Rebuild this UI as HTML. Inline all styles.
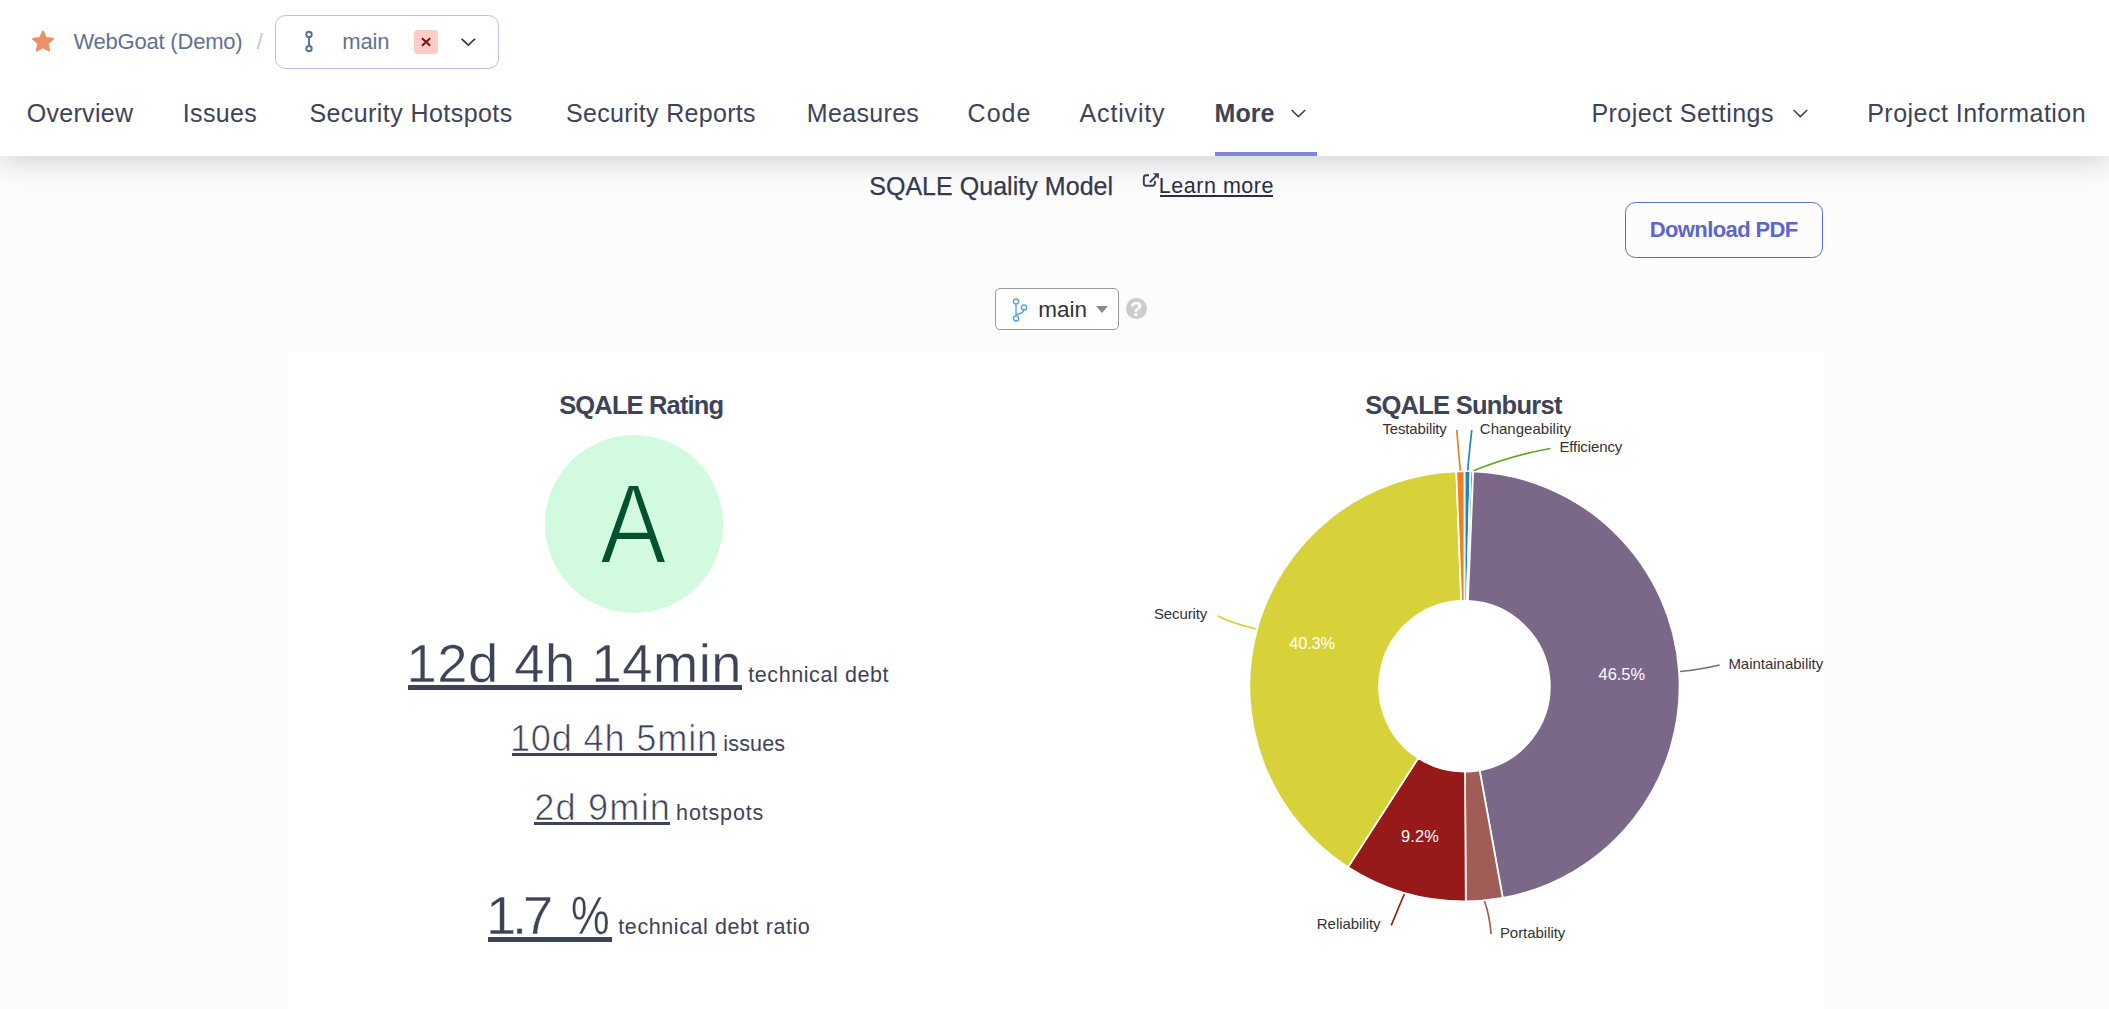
<!DOCTYPE html>
<html lang="en">
<head>
<meta charset="utf-8">
<title>SQALE Quality Model - WebGoat (Demo)</title>
<style>
html,body{margin:0;padding:0;}
html{overflow:hidden;}
body{width:2109px;height:1009px;overflow:hidden;background:#fcfcfd;position:relative;
 font-family:"Liberation Sans",sans-serif;color:#3e4357;}
.t{position:absolute;white-space:nowrap;line-height:1;margin:0;padding:0;}
a{color:inherit;text-decoration:none;}
#hdr{position:absolute;left:0;top:0;width:2109px;height:156px;background:#fff;
 box-shadow:0 2px 30px 0 rgba(29,33,47,.235);z-index:5;}
.nav{font-size:24.5px;color:#3e4357;}
#panel{position:absolute;left:287.7px;top:351.8px;width:1537.4px;height:657.2px;background:#fff;}
.big{color:#3e4357;text-decoration:none;}
.thin{-webkit-text-stroke:.7px #fff;}
.thin1{-webkit-text-stroke:.4px #fff;}
.ul{position:absolute;background:#3e4357;}
.sm{font-size:21px;color:#3e4357;}
svg{position:absolute;overflow:visible;}
.cl{color:#333;}
.pl{color:#fff;}
</style>
</head>
<body>

<!-- ================= HEADER ================= -->
<div id="hdr">
  <!-- star -->
  <svg style="left:31px;top:30px" width="24" height="23" viewBox="0 0 24 23">
    <path d="M12 1.5 L14.9 8.0 L22.0 8.8 L16.7 13.6 L18.2 20.7 L12 17.1 L5.8 20.7 L7.3 13.6 L2.0 8.8 L9.1 8.0 Z" fill="#ee9067" stroke="#ee9067" stroke-width="1.9" stroke-linejoin="round"/>
  </svg>
  <span class="t" id="crumb" style="left:73.4px;top:30.62px;font-size:22px;color:#5f7195;letter-spacing:-0.21px;">WebGoat (Demo)</span>
  <span class="t" id="slash" style="left:256.8px;top:30.62px;font-size:22px;color:#c4c7cf;letter-spacing:0;">/</span>

  <!-- branch box -->
  <div id="bbox" style="position:absolute;left:275px;top:15px;width:222px;height:52px;border:1px solid #b8c2dc;border-radius:10.5px;background:#fff;"></div>
  <svg style="left:304px;top:30px" width="10" height="23" viewBox="0 0 10 23">
    <circle cx="5" cy="4.4" r="2.7" fill="none" stroke="#5f7195" stroke-width="2"/>
    <circle cx="5" cy="18.6" r="2.7" fill="none" stroke="#5f7195" stroke-width="2"/>
    <line x1="5" y1="7" x2="5" y2="16" stroke="#5f7195" stroke-width="2"/>
  </svg>
  <span class="t" id="bmain" style="left:342.2px;top:30.62px;font-size:22px;color:#5f7195;letter-spacing:-0.10px;">main</span>
  <div style="position:absolute;left:414px;top:30px;width:24px;height:24px;border-radius:3.5px;background:#fecdca;"></div>
  <svg style="left:414px;top:30px" width="24" height="24" viewBox="0 0 24 24">
    <path d="M8.0 8.2 L16.2 15.8 M16.2 8.2 L8.0 15.8" stroke="#7a130c" stroke-width="2" fill="none"/>
  </svg>
  <svg style="left:460px;top:37px" width="17" height="11" viewBox="0 0 17 11">
    <path d="M1.6 1.8 L8.3 8.2 L15 1.8" stroke="#2f3448" stroke-width="1.65" fill="none"/>
  </svg>

  <!-- nav -->
  <nav>
  <a class="t nav" id="n1" style="left:26.7px;top:101.08px;font-size:25px;letter-spacing:0.31px;">Overview</a>
  <a class="t nav" id="n2" style="left:182.8px;top:101.08px;font-size:25px;letter-spacing:0.36px;">Issues</a>
  <a class="t nav" id="n3" style="left:309.4px;top:101.08px;font-size:25px;letter-spacing:0.43px;">Security Hotspots</a>
  <a class="t nav" id="n4" style="left:566.0px;top:101.08px;font-size:25px;letter-spacing:0.32px;">Security Reports</a>
  <a class="t nav" id="n5" style="left:806.8px;top:101.08px;font-size:25px;letter-spacing:0.33px;">Measures</a>
  <a class="t nav" id="n6" style="left:967.6px;top:101.08px;font-size:25px;letter-spacing:0.99px;">Code</a>
  <a class="t nav" id="n7" style="left:1079.6px;top:101.08px;font-size:25px;letter-spacing:0.83px;">Activity</a>
  <a class="t nav" id="n8" style="left:1214.6px;top:101.08px;font-weight:bold;font-size:25px;letter-spacing:-0.00px;">More</a>
  <svg style="left:1290px;top:108.4px" width="17" height="11" viewBox="0 0 17 11">
    <path d="M1.6 2 L8.4 8.5 L15.2 2" stroke="#3e4357" stroke-width="1.65" fill="none"/>
  </svg>
  <div style="position:absolute;left:1215px;top:152px;width:102px;height:4px;background:#7b85d9;"></div>
  <a class="t nav" id="n9" style="left:1591.4px;top:101.08px;font-size:25px;letter-spacing:0.46px;">Project Settings</a>
  <svg style="left:1792px;top:108.4px" width="17" height="11" viewBox="0 0 17 11">
    <path d="M1.6 2 L8.4 8.5 L15.2 2" stroke="#3e4357" stroke-width="1.65" fill="none"/>
  </svg>
  <a class="t nav" id="n10" style="left:1867.2px;top:101.08px;font-size:25px;letter-spacing:0.48px;">Project Information</a>
  </nav>
</div>

<!-- ================= TITLE ROW ================= -->
<h1 class="t" id="title" style="left:869.2px;top:174.08px;font-size:25px;font-weight:normal;color:#353a4f;-webkit-text-stroke:.25px #353a4f;letter-spacing:0.04px;">SQALE Quality Model</h1>
<svg style="left:1142px;top:172px" width="18" height="16" viewBox="0 0 18 16">
  <path d="M7 3.3 H4.3 Q1.8 3.3 1.8 5.8 V11.2 Q1.8 13.7 4.3 13.7 H10.4 Q12.9 13.7 12.9 11.2 V9" fill="none" stroke="#3a3f55" stroke-width="1.9"/>
  <path d="M7.9 10.2 L15 3.1" fill="none" stroke="#3a3f55" stroke-width="2"/>
  <path d="M11 1.2 H16.9 V7.1 Z" fill="#3a3f55"/>
</svg>
<a class="t" id="learn" style="left:1158.8px;top:176.05px;font-size:21.5px;color:#2a2f45;text-decoration:none;letter-spacing:0.52px;">Learn more</a>

<div class="ul" style="left:1160px;top:195px;width:113.2px;height:2px;background:#2a2f45;"></div>
<div id="dl" style="position:absolute;left:1625px;top:202px;width:196px;height:54px;border:1px solid #5d6cd0;border-radius:10.5px;background:transparent;"></div>
<span class="t" id="dltext" style="left:1649.7px;top:218.62px;font-size:22px;font-weight:bold;color:#5b67c9;letter-spacing:-0.60px;">Download PDF</span>

<!-- branch select -->
<div id="sel" style="position:absolute;left:995px;top:288px;width:122px;height:40px;border:1px solid #9a9a9a;border-radius:5px;background:#fff;"></div>
<svg style="left:1011px;top:297px" width="18" height="26" viewBox="0 0 18 26">
  <circle cx="5" cy="4.4" r="2.6" fill="#fff" stroke="#4b9fd5" stroke-width="1.3"/>
  <circle cx="5" cy="21.4" r="2.6" fill="#fff" stroke="#4b9fd5" stroke-width="1.3"/>
  <circle cx="13" cy="10.4" r="2.6" fill="#fff" stroke="#4b9fd5" stroke-width="1.3"/>
  <path d="M5 7 V18.8 M5 17.6 Q12 16.5 12.8 13" fill="none" stroke="#4b9fd5" stroke-width="1.3"/>
</svg>
<span class="t" id="smain" style="left:1038.3px;top:299.20px;font-size:22.5px;color:#333;letter-spacing:-0.05px;">main</span>
<div style="position:absolute;left:1096px;top:306px;width:0;height:0;border-left:6px solid transparent;border-right:6px solid transparent;border-top:7px solid #888;"></div>
<div style="position:absolute;left:1125.5px;top:298.4px;width:21px;height:21px;border-radius:50%;background:#cccccc;"></div>
<span class="t" id="qm" style="left:1129.9px;top:299.2px;font-size:20px;font-weight:bold;color:#fff;">?</span>

<!-- ================= PANEL ================= -->
<div id="panel"></div>

<h2 class="t" id="h_rating" style="left:559.2px;top:392.66px;font-size:25.5px;font-weight:bold;color:#3e4357;letter-spacing:-0.85px;">SQALE Rating</h2>
<div id="ratingc" style="position:absolute;left:545px;top:435px;width:178px;height:178px;border-radius:50%;background:#d2fadf;"></div>
<span class="t" id="ratingA" style="left:600.4px;top:467.3px;font-size:114px;color:#04502f;-webkit-text-stroke:2.2px #d2fadf;transform-origin:0 0;transform:scaleX(0.875);">A</span>

<a class="t big thin1" id="v1" style="left:406.5px;top:637.27px;font-size:54.3px;letter-spacing:0.54px;">12d 4h 14min</a>
<span class="t sm" id="l1" style="left:748.2px;top:665.05px;font-size:21.5px;letter-spacing:0.59px;">technical debt</span>
<a class="t big thin" id="v2" style="left:509.9px;top:720.60px;font-size:36.2px;letter-spacing:0.81px;">10d 4h 5min</a>
<span class="t sm" id="l2" style="left:723.3px;top:734.05px;font-size:21.5px;letter-spacing:0.16px;">issues</span>
<a class="t big thin" id="v3" style="left:534.3px;top:789.60px;font-size:36.2px;letter-spacing:1.16px;">2d 9min</a>
<span class="t sm" id="l3" style="left:676.1px;top:803.05px;font-size:21.5px;letter-spacing:0.84px;">hotspots</span>
<a class="t big thin1" id="v4" style="left:486.1px;top:889.27px;font-size:54.3px;letter-spacing:-4.25px;">1.7</a>
<span class="t big thin1" id="v4b" style="left:570.7px;top:889.27px;font-size:54.3px;letter-spacing:0;transform-origin:0 0;transform:scaleX(0.8);">%</span>
<span class="t sm" id="l4" style="left:618.3px;top:917.05px;font-size:21.5px;letter-spacing:0.58px;">technical debt ratio</span>


<div class="ul" style="left:408.1px;top:685.2px;width:333.7px;height:4.6px;"></div>
<div class="ul" style="left:511.9px;top:753.1px;width:205.6px;height:2.7px;"></div>
<div class="ul" style="left:534.4px;top:822.0px;width:135.7px;height:2.7px;"></div>
<div class="ul" style="left:487.5px;top:937.2px;width:124.2px;height:4.6px;"></div>

<h2 class="t" id="h_sun" style="left:1365.2px;top:392.66px;font-size:25.5px;font-weight:bold;color:#3e4357;letter-spacing:-0.74px;">SQALE Sunburst</h2>

<!-- CHART -->
<svg id="chart" style="left:0;top:0" width="2109" height="1009" viewBox="0 0 2109 1009">
  <path d="M1464.45 471.15 A215.1 215.1 0 0 1 1470.53 471.24 L1466.86 600.88 A85.4 85.4 0 0 0 1464.45 600.85 Z" fill="#2484c1" stroke="#fff" stroke-width="1.75" stroke-linejoin="round"/>
  <path d="M1470.53 471.24 A215.1 215.1 0 0 1 1473.23 471.33 L1467.94 600.92 A85.4 85.4 0 0 0 1466.86 600.88 Z" fill="#65a620" stroke="#fff" stroke-width="1.75" stroke-linejoin="round"/>
  <path d="M1473.23 471.33 A215.1 215.1 0 0 1 1502.76 897.91 L1479.66 770.28 A85.4 85.4 0 0 0 1467.94 600.92 Z" fill="#7b6888" stroke="#fff" stroke-width="1.75" stroke-linejoin="round"/>
  <path d="M1502.76 897.91 A215.1 215.1 0 0 1 1465.80 901.35 L1464.99 771.65 A85.4 85.4 0 0 0 1479.66 770.28 Z" fill="#a05d56" stroke="#fff" stroke-width="1.75" stroke-linejoin="round"/>
  <path d="M1465.80 901.35 A215.1 215.1 0 0 1 1348.05 867.14 L1418.24 758.07 A85.4 85.4 0 0 0 1464.99 771.65 Z" fill="#961a1a" stroke="#fff" stroke-width="1.75" stroke-linejoin="round"/>
  <path d="M1348.05 867.14 A215.1 215.1 0 0 1 1456.34 471.30 L1461.23 600.91 A85.4 85.4 0 0 0 1418.24 758.07 Z" fill="#d8d23a" stroke="#fff" stroke-width="1.75" stroke-linejoin="round"/>
  <path d="M1456.34 471.30 A215.1 215.1 0 0 1 1464.45 471.15 L1464.45 600.85 A85.4 85.4 0 0 0 1461.23 600.91 Z" fill="#e98125" stroke="#fff" stroke-width="1.75" stroke-linejoin="round"/>
  <path d="M1456.8 430 C1458 445 1459 458 1460.4 470.6" fill="none" stroke="#e98125" stroke-width="1.7"/>
  <path d="M1471.8 430 C1470 446 1468.6 458 1467.8 470.4" fill="none" stroke="#2484c1" stroke-width="1.7"/>
  <path d="M1550.3 448.5 C1520 454 1495 462 1473.6 470.8" fill="none" stroke="#65a620" stroke-width="1.7"/>
  <path d="M1719.6 665 C1705 668.5 1692 670.5 1680 671.5" fill="none" stroke="#7b6888" stroke-width="1.7"/>
  <path d="M1491.1 934.1 C1490 920 1487 908 1484.4 901" fill="none" stroke="#a05d56" stroke-width="1.7"/>
  <path d="M1391.2 925.4 C1396 914 1400 904 1404.4 894" fill="none" stroke="#961a1a" stroke-width="1.7"/>
  <path d="M1217.9 615.8 C1228 622 1242 625.5 1256.4 629" fill="none" stroke="#d8d23a" stroke-width="1.7"/>
</svg>

<!-- chart labels -->
<span class="t cl" id="c1" style="left:1382.4px;top:420.55px;font-size:15px;letter-spacing:-0.14px;">Testability</span>
<span class="t cl" id="c2" style="left:1479.8px;top:420.55px;font-size:15px;letter-spacing:0.02px;">Changeability</span>
<span class="t cl" id="c3" style="left:1559.4px;top:438.55px;font-size:15px;letter-spacing:-0.11px;">Efficiency</span>
<span class="t cl" id="c4" style="left:1728.4px;top:655.55px;font-size:15px;letter-spacing:-0.02px;">Maintainability</span>
<span class="t cl" id="c5" style="left:1499.9px;top:924.55px;font-size:15px;letter-spacing:-0.04px;">Portability</span>
<span class="t cl" id="c6" style="left:1316.8px;top:915.55px;font-size:15px;letter-spacing:-0.04px;">Reliability</span>
<span class="t cl" id="c7" style="left:1154.0px;top:605.55px;font-size:15px;letter-spacing:-0.14px;">Security</span>
<span class="t pl" id="p1" style="left:1598.5px;top:666.36px;font-size:16.4px;letter-spacing:0.01px;">46.5%</span>
<span class="t pl" id="p2" style="left:1289.3px;top:635.36px;font-size:16.4px;letter-spacing:-0.20px;">40.3%</span>
<span class="t pl" id="p3" style="left:1401.1px;top:828.36px;font-size:16.4px;letter-spacing:0.10px;">9.2%</span>

</body>
</html>
